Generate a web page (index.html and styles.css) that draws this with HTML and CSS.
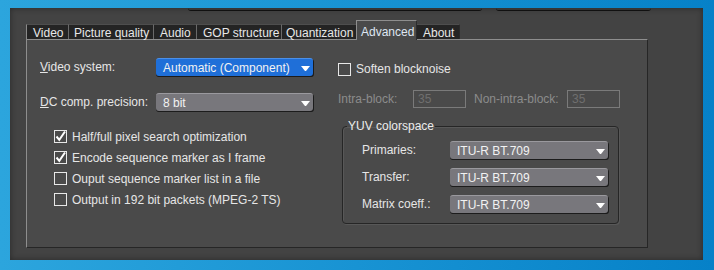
FILE: index.html
```html
<!DOCTYPE html>
<html lang="en">
<head>
    <meta charset="UTF-8">
    <title>Encoder settings - Advanced</title>
    <link rel="stylesheet" href="styles.css">
</head>
<body>
    <div class="window">
        <div class="topbar">
            <div class="topbar__piece topbar__piece--a"></div>
            <div class="topbar__piece topbar__piece--b"></div>
        </div>

        <div class="tabs">
            <div class="tab">Video</div>
            <div class="tab">Picture quality</div>
            <div class="tab">Audio</div>
            <div class="tab">GOP structure</div>
            <div class="tab">Quantization</div>
            <div class="tab tab--active">Advanced</div>
            <div class="tab">About</div>
        </div>

        <div class="panel">
            <div class="col col--left">
                <div class="row">
                    <span class="label label--wide"><u>V</u>ideo system:</span>
                    <div class="select select--blue">
                        <span>Automatic (Component)</span>
                        <svg class="arrow" width="9" height="5" viewBox="0 0 9 5"><polygon points="0,0 9,0 5,5 4,5" fill="#fff"/></svg>
                    </div>
                </div>
                <div class="row row--second">
                    <span class="label label--wide"><u>D</u>C comp. precision:</span>
                    <div class="select">
                        <span>8 bit</span>
                        <svg class="arrow" width="9" height="5" viewBox="0 0 9 5"><polygon points="0,0 9,0 5,5 4,5" fill="#fff"/></svg>
                    </div>
                </div>

                <div class="checks">
                    <div class="check">
                        <span class="box">
                            <svg width="13" height="13" viewBox="0 0 13 13"><path d="M2.5 6.5 L5.3 9.8 L11 1.5" fill="none" stroke="#fff" stroke-width="2"/></svg>
                        </span>
                        Half/full pixel search optimization
                    </div>
                    <div class="check">
                        <span class="box">
                            <svg width="13" height="13" viewBox="0 0 13 13"><path d="M2.5 6.5 L5.3 9.8 L11 1.5" fill="none" stroke="#fff" stroke-width="2"/></svg>
                        </span>
                        Encode sequence marker as I frame
                    </div>
                    <div class="check">
                        <span class="box"></span>
                        Ouput sequence marker list in a file
                    </div>
                    <div class="check">
                        <span class="box"></span>
                        Output in 192 bit packets (MPEG-2 TS)
                    </div>
                </div>
            </div>

            <div class="col col--right">
                <div class="check check--soften">
                    <span class="box"></span>
                    Soften blocknoise
                </div>

                <div class="row row--intra">
                    <span class="label label--dim label--intra">Intra-block:</span>
                    <span class="field">35</span>
                    <span class="label label--dim label--nonintra">Non-intra-block:</span>
                    <span class="field">35</span>
                </div>

                <fieldset class="group">
                    <legend>YUV colorspace</legend>
                    <div class="row">
                        <span class="label label--group">Primaries:</span>
                        <div class="select select--group">
                            <span>ITU-R BT.709</span>
                            <svg class="arrow" width="9" height="5" viewBox="0 0 9 5"><polygon points="0,0 9,0 5,5 4,5" fill="#fff"/></svg>
                        </div>
                    </div>
                    <div class="row">
                        <span class="label label--group">Transfer:</span>
                        <div class="select select--group">
                            <span>ITU-R BT.709</span>
                            <svg class="arrow" width="9" height="5" viewBox="0 0 9 5"><polygon points="0,0 9,0 5,5 4,5" fill="#fff"/></svg>
                        </div>
                    </div>
                    <div class="row">
                        <span class="label label--group">Matrix coeff.:</span>
                        <div class="select select--group">
                            <span>ITU-R BT.709</span>
                            <svg class="arrow" width="9" height="5" viewBox="0 0 9 5"><polygon points="0,0 9,0 5,5 4,5" fill="#fff"/></svg>
                        </div>
                    </div>
                </fieldset>
            </div>
        </div>
    </div>
</body>
</html>
```

FILE: styles.css
```css
body {
    margin: 0;
    width: 714px;
    height: 270px;
    overflow: hidden;
    font-family: "Liberation Sans", Arial, sans-serif;
    font-size: 12px;
    color: #e6e6e6;
    background: linear-gradient(90deg, #2ca5dd 0%, #1893d3 50%, #0681c8 100%);
}
.window {
    margin: 8px 0 0 10px;
    width: 693px;
    height: 252px;
    background-color: #434343;
    box-shadow: inset 0 0 6px rgba(0, 0, 0, 0.4);
    overflow: hidden;
}

/* cut-off controls from the area above */
.topbar {
    display: flex;
    height: 3px;
}
.topbar__piece {
    height: 2px;
    background: #353535;
    border-bottom: 1px solid #101010;
    border-bottom-left-radius: 3px;
    border-bottom-right-radius: 3px;
}
.topbar__piece--a { margin-left: 178px; width: 294px; }
.topbar__piece--b { margin-left: 14px; width: 155px; }

/* tabs */
.tabs {
    display: flex;
    align-items: flex-end;
    height: 19px;
    margin: 9px 0 0 16px;
}
.tab {
    box-sizing: border-box;
    height: 15px;
    line-height: 16px;
    padding-left: 5px;
    background: #242424;
    border-top: 1px solid #4e4e4e;
    border-left: 1px solid #6a6a6a;
    color: #e8e8e8;
    white-space: nowrap;
}
.tab:nth-child(1) { width: 42px; border-left-color: #8a8a8a; padding-left: 6px; }
.tab:nth-child(2) { width: 85px; }
.tab:nth-child(3) { width: 43px; padding-left: 6px; }
.tab:nth-child(4) { width: 85px; padding-left: 6px; }
.tab:nth-child(5) { width: 75px; padding-left: 4px; }
.tab:nth-child(7) { width: 43px; border-left: none; border-right: 1px solid #2a2a2a; padding-left: 6px; }
.tab--active {
    width: 61px;
    height: 20px;
    line-height: 23px;
    padding-left: 4px;
    margin-bottom: -1px;
    background: #4a4a4a;
    border-top: 1px solid #8e8e8e;
    border-left: 1px solid #8e8e8e;
    border-right: 1px solid #2c2c2c;
    color: #dfe6f2;
    position: relative;
}

/* tab page */
.panel {
    box-sizing: border-box;
    display: flex;
    margin-left: 16px;
    width: 622px;
    height: 209px;
    padding: 18px 0 0 13px;
    background: #4a4a4a;
    border-top: 1px solid #8e8e8e;
    border-left: 1px solid #8e8e8e;
    border-right: 1px solid #262626;
    border-bottom: 1px solid #262626;
}
.col--left { width: 298px; }
.col--right { flex: 1; }

.row {
    display: flex;
    align-items: center;
    height: 18px;
}
.row--second { margin-top: 17px; }
.label--wide { width: 116px; }
.label--dim { color: #8c8c8c; }
.label--intra { width: 75px; }
.label--nonintra { width: 93px; margin-left: 8px; }
.label--group { width: 88px; }
u { text-underline-offset: 1px; }

/* drop-down lists */
.select {
    box-sizing: border-box;
    display: flex;
    align-items: center;
    justify-content: space-between;
    width: 157px;
    height: 18px;
    padding: 0 3px 0 7px;
    border-radius: 3px;
    background: #78777c;
    border-top: 1px solid #9a999e;
    box-shadow: 0 1px 0 #1c1c1c, 1px 1px 0 #1c1c1c;
    color: #f2f2f2;
}
.select--blue {
    background: #1f6fd8;
    border-top-color: #4b8fe8;
}
.select--group { width: 158px; }
.arrow { margin-top: 2px; }

/* check boxes */
.checks {
    margin: 15px 0 0 14px;
}
.check {
    display: flex;
    align-items: center;
    height: 21px;
    white-space: nowrap;
}
.box {
    box-sizing: border-box;
    width: 13px;
    height: 13px;
    margin-right: 5px;
    border: 1px solid #e8e8e8;
    position: relative;
}
.box svg {
    position: absolute;
    left: -1px;
    top: -1px;
}
.check--soften {
    height: 18px;
    margin-top: 2px;
}

/* disabled quantizer fields */
.row--intra { margin-top: 12px; }
.field {
    box-sizing: border-box;
    width: 53px;
    height: 18px;
    line-height: 16px;
    padding-left: 4px;
    border: 1px solid #7a7a7a;
    color: #6f6f6f;
}

/* colorspace group */
.group {
    box-sizing: border-box;
    width: 277px;
    margin: 12px 0 0 4px;
    padding: 0 0 10px 19px;
    border: 1px solid #262626;
    border-radius: 4px;
    box-shadow: inset 1px 1px 0 #585858, 1px 1px 0 #585858;
}
.group legend {
    margin-left: -15px;
    padding: 0 1px;
    line-height: 12px;
    color: #ececec;
}
.group .row { margin-top: 9px; }
```
